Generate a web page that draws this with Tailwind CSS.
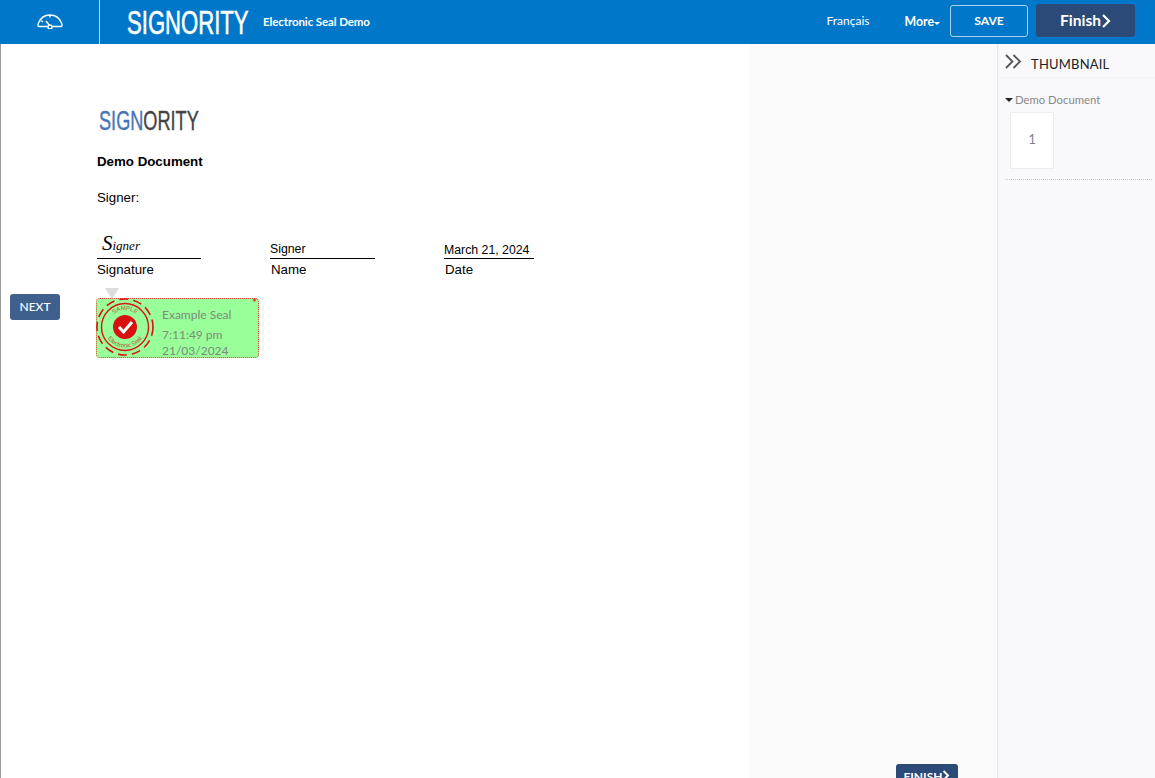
<!DOCTYPE html>
<html>
  <head>
    <meta charset="utf-8">
    <title>Signority - Electronic Seal Demo</title>
    <meta name="viewport" content="width=device-width, initial-scale=1">
    <script src="https://cdn.jsdelivr.net/npm/@tailwindcss/browser@4"></script>
  </head>
  <body class="h-[778px] w-[1155px] overflow-hidden bg-white font-['Lato',sans-serif]">
    <!-- top bar -->
    <header class="flex h-[44px] items-center bg-[#0077c8] text-white">
      <div class="flex h-full w-[100px] items-center justify-center border-r border-r-[#c4def1]">
        <svg class="mb-[2px]" width="26" height="16" viewBox="0 0 26 16" fill="none" stroke="white" stroke-width="1.4">
          <path d="M2 13.5 C0.5 13.5 0.8 11.5 1.5 10 C3.5 5 8 2 13 2 C18 2 22.5 5 24.5 10 C25.2 11.5 25.5 13.5 24 13.5 L15.5 13.5 M10.5 13.5 L2 13.5" />
          <path d="M13 2 V4.5 M6 9 L4.2 7.6 M9 8 L12.2 12" />
          <circle cx="13" cy="14" r="2" />
        </svg>
      </div>
      <div class="ml-[27px] w-[121px]">
        <div class="w-max origin-left scale-x-[.65] font-['Liberation_Sans',sans-serif] text-[34px] leading-none [-webkit-text-stroke:0.6px_white]">SIGNORITY</div>
      </div>
      <div class="ml-[15px] text-[11.5px] font-bold tracking-[-.1px]">Electronic Seal Demo</div>
      <div class="ml-auto flex items-center">
        <span class="mb-[3px] text-[12px]">Français</span>
        <span class="ml-[35px] flex items-center text-[12.3px] font-bold">More<span class="mt-[2px] border-x-[3px] border-t-[3px] border-x-transparent border-t-white"></span></span>
        <button class="mb-[2px] ml-[10px] h-[32px] w-[78px] rounded-[3px] border border-[#a9d3ef] text-[12.2px] font-bold">SAVE</button>
        <button class="mr-[20px] mb-[3px] ml-[8px] flex h-[33px] w-[99px] items-center justify-center rounded-[3px] bg-[#2b4a78] text-[15.5px] font-bold">
          Finish
          <svg width="10" height="14" viewBox="0 0 10 14" fill="none" stroke="white" stroke-width="2.2"><path d="M2 1 L8 7 L2 13" /></svg>
        </button>
      </div>
    </header>

    <div class="relative flex h-[734px]">
      <!-- document -->
      <main class="w-[749px] border-l border-l-[#9a9a9a] bg-white pt-[60px] pl-[96px] font-['Liberation_Sans',sans-serif] text-black">
        <div class="h-[34px] w-[100px] pl-[2px]">
          <div class="w-max origin-left scale-x-[.648] text-[28px] leading-[34px] text-[#444] [-webkit-text-stroke:0.4px_currentColor]"><span class="text-[#4a74b4]">SIGN</span>ORITY</div>
        </div>
        <h1 class="mt-[16px] text-[13.3px] leading-[16px] font-bold">Demo Document</h1>
        <p class="mt-[20px] text-[13.3px] leading-[16px]">Signer:</p>

        <div class="mt-[22px] flex">
          <div class="w-[173px]">
            <div class="h-[31px] w-[104px] border-b border-b-black pt-[3px] pl-[5px] font-['Liberation_Serif',serif] text-[13px] leading-[24px] italic"><span class="text-[21px]">S</span>igner</div>
            <div class="mt-[2px] text-[13.3px] leading-[18px]">Signature</div>
          </div>
          <div class="w-[174px]">
            <div class="flex h-[31px] w-[105px] items-end border-b border-b-black pb-[1px] text-[12.3px] leading-[15px]">Signer</div>
            <div class="mt-[2px] pl-[1px] text-[13.3px] leading-[18px]">Name</div>
          </div>
          <div>
            <div class="flex h-[31px] w-[90px] items-end border-b border-b-black text-[12.3px] leading-[15px] whitespace-nowrap">March 21, 2024</div>
            <div class="mt-[2px] pl-[1px] text-[13.3px] leading-[18px]">Date</div>
          </div>
        </div>

        <!-- seal field -->
        <div class="relative mt-[19px] -ml-[1px] flex h-[60px] w-[163px] rounded-[4px] border border-dotted border-[#e8402f] bg-[#99ff99] font-['Lato',sans-serif] text-[#7d8a7d]">
          <div class="absolute -top-[11px] left-[8px] h-0 w-0 border-x-[7px] border-t-[11px] border-x-transparent border-t-[#dddddd]"></div>
          <svg class="mt-[-2px] ml-[-2px] shrink-0" width="60" height="60" viewBox="0 0 60 60" fill="none">
            <circle cx="30" cy="30" r="28" stroke="#dd1111" stroke-width="1.6" stroke-dasharray="9 5" />
            <circle cx="30" cy="30" r="23.5" stroke="#dd1111" stroke-width="1.4" />
            <circle cx="30" cy="30" r="12" fill="#d91010" />
            <path d="M24 30 L28.5 35 L37 25" stroke="white" stroke-width="3" />
            <path id="sealTop" d="M13 30 A17 17 0 0 1 47 30" />
            <path id="sealBottom" d="M9.5 30 A20.5 20.5 0 0 0 50.5 30" />
            <text font-size="6" fill="#b3542f" font-family="Liberation Sans"><textPath href="#sealTop" startOffset="50%" text-anchor="middle">SAMPLE</textPath></text>
            <text font-size="6" fill="#b3542f" font-family="Liberation Sans"><textPath href="#sealBottom" startOffset="50%" text-anchor="middle">Electronic Seal</textPath></text>
          </svg>
          <div class="mt-[8px] ml-[7px] text-[12px]">
            <div class="leading-[15px]">Example Seal</div>
            <div class="mt-[5px] leading-[16px]">7:11:49 pm</div>
            <div class="leading-[16px]">21/03/2024</div>
          </div>
          <span class="absolute top-[-2px] right-[1px] text-[11px] leading-[12px] font-bold text-[#d9362a]">*</span>
        </div>
      </main>

      <!-- grey margin beside the document -->
      <div class="w-[248px] bg-[#fafafa]"></div>

      <!-- thumbnails -->
      <aside class="w-[158px] border-l border-l-[#e6e6e6] bg-[#f9f9fb]">
        <div class="flex h-[34px] items-center border-b border-b-[#f3f3f5] pl-[7px]">
          <svg class="mt-[2px]" width="17" height="15" viewBox="0 0 17 15" fill="none" stroke="#555" stroke-width="1.8"><path d="M1 1 L7.5 7.5 L1 14 M8.5 1 L15 7.5 L8.5 14" /></svg>
          <span class="mt-[8px] ml-[9px] text-[13px] tracking-[.2px] text-[#222]">THUMBNAIL</span>
        </div>
        <div class="mt-[14px] flex items-center pl-[7px] text-[11.3px] leading-[15px] text-[#888]">
          <span class="mt-[1px] mr-[2px] border-x-[4px] border-t-[4px] border-x-transparent border-t-[#222]"></span>Demo Document
        </div>
        <div class="mt-[5px] ml-[12px] flex h-[57px] w-[44px] items-center justify-center border border-[#eeeeee] bg-white text-[12.5px] text-[#7a7f8c]">1</div>
        <div class="mt-[10px] ml-[7px] w-[147px] border-b border-dotted border-b-[#cccccc]"></div>
      </aside>

      <button class="absolute top-[250px] left-[10px] h-[26px] w-[50px] rounded-[3px] bg-[#3f5f8c] text-[12px] font-medium text-white">NEXT</button>
      <button class="absolute top-[720px] left-[896px] flex h-[30px] w-[62px] items-start justify-center rounded-[3px] bg-[#2b4a78] pt-[4px] text-[12px] font-bold text-white">
        FINISH
        <svg class="mt-[2px]" width="8" height="11" viewBox="0 0 8 11" fill="none" stroke="white" stroke-width="2"><path d="M1.5 1 L6 5.5 L1.5 10" /></svg>
      </button>
    </div>
  </body>
</html>
